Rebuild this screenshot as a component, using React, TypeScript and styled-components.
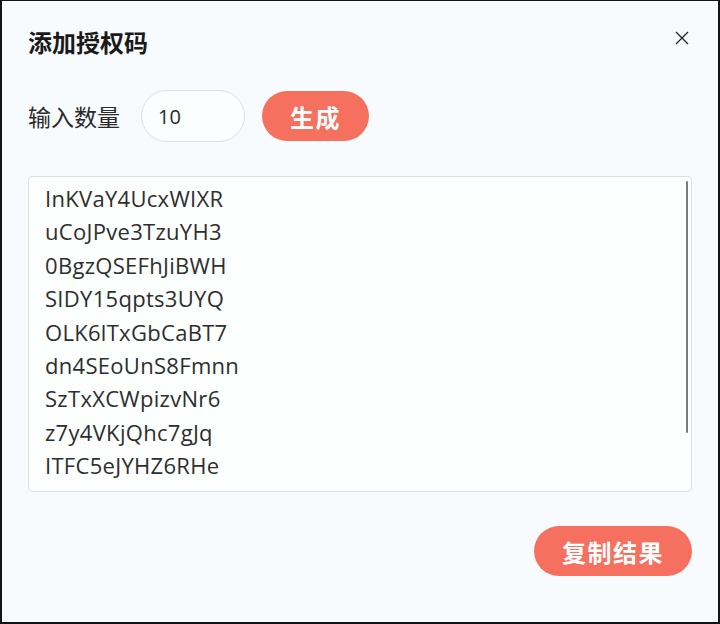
import styled, { createGlobalStyle } from 'styled-components';

const codes = [
  'InKVaY4UcxWIXR',
  'uCoJPve3TzuYH3',
  '0BgzQSEFhJiBWH',
  'SIDY15qpts3UYQ',
  'OLK6lTxGbCaBT7',
  'dn4SEoUnS8Fmnn',
  'SzTxXCWpizvNr6',
  'z7y4VKjQhc7gJq',
  'ITFC5eJYHZ6RHe',
  'bQEWJzmNRqRF',
];

export default function App() {
  return (
    <>
      <GlobalStyle />
      <Dialog>
        <Header>
          <Title>添加授权码</Title>
          <CloseButton aria-label="关闭">
            <svg width="14" height="14" viewBox="0 0 14 14">
              <path d="M1 1L13 13M13 1L1 13" stroke="#222" strokeWidth="1.3" fill="none" />
            </svg>
          </CloseButton>
        </Header>
        <Row>
          <Label>输入数量</Label>
          <CountInput defaultValue="10" />
          <PillButton>生成</PillButton>
        </Row>
        <ResultBox>
          <Result readOnly value={codes.join('\n')} />
          <ScrollThumb />
        </ResultBox>
        <Footer>
          <PillButton wide>复制结果</PillButton>
        </Footer>
      </Dialog>
    </>
  );
}

const GlobalStyle = createGlobalStyle`
  html, body {
    margin: 0;
    padding: 0;
    background: #f8fbfd;
  }
  body {
    font-family: "Noto Sans CJK SC", "Noto Sans", sans-serif;
  }
`;

const Dialog = styled.div`
  box-sizing: border-box;
  width: 720px;
  height: 624px;
  background: #f8fbfd;
  border: 2px solid #141414;
  border-top-width: 1px;
  padding: 27px 26px 0 26px;
  display: flex;
  flex-direction: column;
`;

const Header = styled.div`
  display: flex;
  justify-content: space-between;
  align-items: center;
  height: 28px;
`;

const Title = styled.h1`
  margin: 0;
  font-size: 24px;
  line-height: 28px;
  font-weight: 700;
  color: #1a1a1a;
`;

const CloseButton = styled.button`
  border: none;
  background: none;
  padding: 0;
  margin: -8px 3px 0 0;
  width: 14px;
  height: 14px;
  display: flex;
  cursor: pointer;
`;

const Row = styled.div`
  display: flex;
  align-items: center;
  margin-top: 34px;
  height: 52px;
`;

const Label = styled.span`
  font-size: 23px;
  color: #2a2a2a;
  margin-right: 21px;
`;

const CountInput = styled.input`
  box-sizing: border-box;
  width: 104px;
  height: 52px;
  border: 1px solid #dcdfe6;
  border-radius: 26px;
  background: #fbfdfe;
  padding: 0 16px;
  font-family: "Open Sans", "Noto Sans", sans-serif;
  font-size: 20px;
  color: #2a2a2a;
  outline: none;
  margin-right: 17px;
`;

const PillButton = styled.button<{ wide?: boolean }>`
  box-sizing: border-box;
  height: 50px;
  width: ${(p) => (p.wide ? '158px' : '107px')};
  border: none;
  border-radius: 25px;
  background: #f6705f;
  color: #ffffff;
  font-family: "Noto Sans CJK SC", sans-serif;
  font-size: 24px;
  font-weight: 700;
  letter-spacing: 1.5px;
  cursor: pointer;
  &:hover {
    filter: opacity(85%);
  }
`;

const ResultBox = styled.div`
  position: relative;
  margin-top: 34px;
  width: 664px;
  height: 316px;
`;

const Result = styled.textarea`
  box-sizing: border-box;
  display: block;
  width: 100%;
  height: 100%;
  border: 1px solid #dcdfe6;
  border-radius: 4px;
  background: #fdfefe;
  padding: 5px 16px 0 16px;
  font-family: "Open Sans", "Noto Sans", sans-serif;
  font-size: 22px;
  letter-spacing: 0.3px;
  line-height: 33.4px;
  color: #2e2e2e;
  resize: none;
  outline: none;
  overflow: hidden;
`;

const ScrollThumb = styled.div`
  position: absolute;
  top: 5px;
  right: 4px;
  width: 2px;
  height: 252px;
  background: #7a7a7a;
  border-radius: 1px;
`;

const Footer = styled.div`
  display: flex;
  justify-content: flex-end;
  margin-top: 34px;
`;
